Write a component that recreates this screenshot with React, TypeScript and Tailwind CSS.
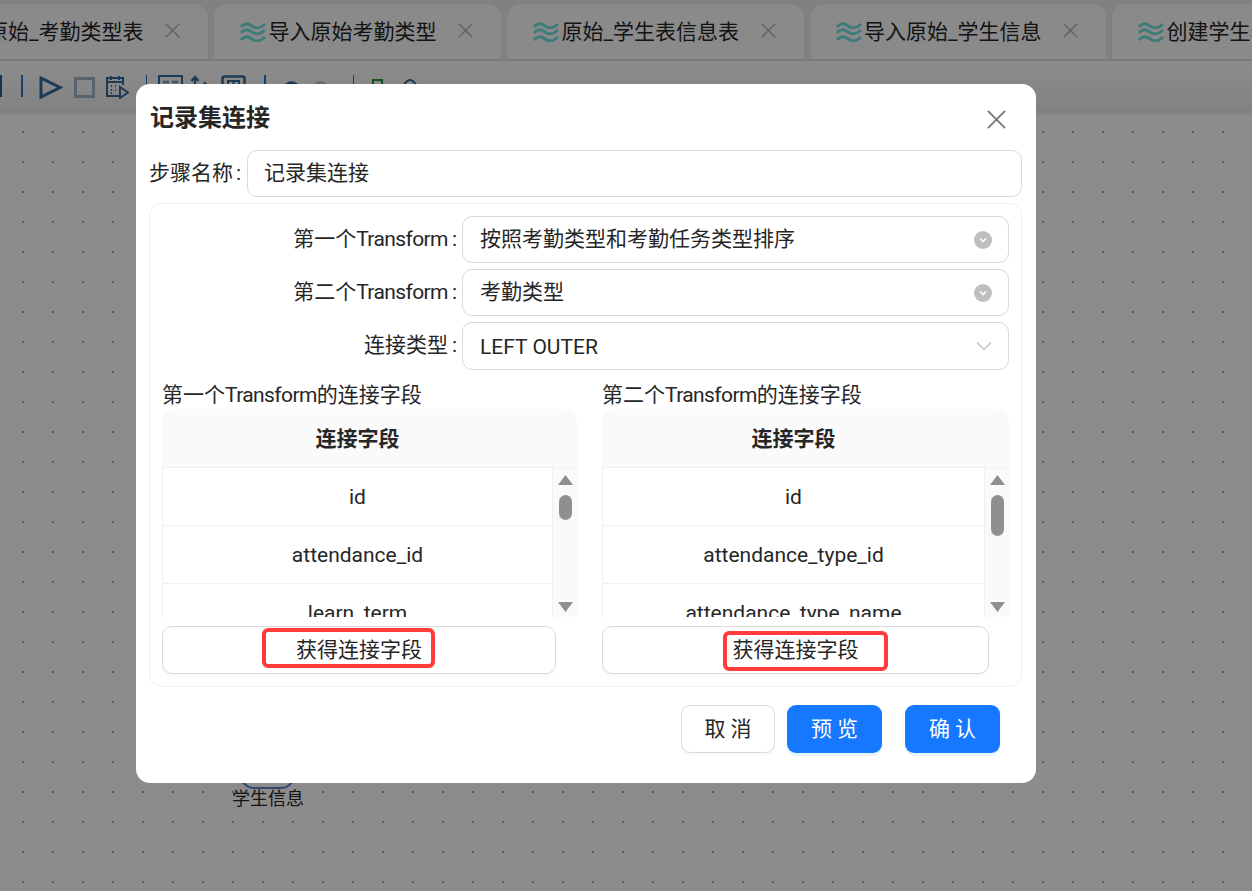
import React from "react";

const font = "font-['Roboto','Noto_Sans_CJK_SC',sans-serif]";

function Wave() {
  return (
    <svg width="26" height="20" viewBox="0 0 26 20" fill="none" stroke="#6fe2dc" strokeWidth="3" className="shrink-0">
      <path d="M1 5 C4 1 8 1 12 4 C16 7 21 6 25 2" />
      <path d="M1 11 C4 7 8 7 12 10 C16 13 21 12 25 8" />
      <path d="M1 18 C4 14 8 14 12 17 C16 20 21 19 25 15" />
    </svg>
  );
}

function X({ size, color, sw }: { size: number; color: string; sw: number }) {
  return (
    <svg width={size} height={size} viewBox="0 0 20 20" fill="none" stroke={color} strokeWidth={sw} className="shrink-0">
      <path d="M1 1 L19 19 M19 1 L1 19" />
    </svg>
  );
}

function Tab({ label, className }: { label: string; className?: string }) {
  return (
    <div className={`shrink-0 flex items-center h-[57px] pl-[26px] pr-[28px] bg-[#fbfbfb] border border-b-[#e0e0e0] border-[#e8e8e8] rounded-t-[15px] ${className ?? ""}`}>
      <Wave />
      <span className="ml-[2px] text-[21px] leading-[30px] text-[#262626] whitespace-nowrap">{label}</span>
      <span className="ml-[22px] mb-[3px]">
        <X size={15} color="#b0b0b0" sw={1.8} />
      </span>
    </div>
  );
}

function Sep({ className }: { className: string }) {
  return <div className={`w-[1.5px] h-[22px] bg-[#1f78d1] shrink-0 ${className}`} />;
}

function Toolbar() {
  const navy = "#34689c";
  return (
    <div className="relative z-10 h-[50px] flex items-start pt-[14px] bg-linear-to-b from-[#ffffff] to-[#ededed] shadow-[0_2px_4px_rgba(0,0,0,0.15)]">
      <div className="w-[2px] h-[22px] bg-[#1f5f99] shrink-0" />
      <Sep className="ml-[19px]" />
      <svg width="24" height="23" viewBox="0 0 24 23" fill="none" stroke={navy} strokeWidth="3" className="ml-[16px] shrink-0 mt-px">
        <path d="M2 2 L21 11.5 L2 21 Z" />
      </svg>
      <svg width="21" height="21" viewBox="0 0 21 21" fill="none" stroke="#a4b4c6" strokeWidth="3" className="ml-[11px] shrink-0 mt-[2px]">
        <rect x="1.5" y="1.5" width="18" height="18" />
      </svg>
      <svg width="24" height="24" viewBox="0 0 24 24" fill="none" stroke={navy} strokeWidth="2" className="ml-[10px] shrink-0">
        <path d="M14 21 H2 V3 H18 V10 M6 1 V5 M14 1 V5 M2 7 H18" />
        <path d="M6 11 H7 M10 11 H11 M6 15 H7 M10 15 H11 M6 18 H7" />
        <path d="M15 12 L23 17.5 L15 23 Z" />
      </svg>
      <Sep className="ml-[17px]" />
      <svg width="25" height="24" viewBox="0 0 25 24" fill="none" stroke={navy} strokeWidth="2" className="ml-[11px] shrink-0">
        <rect x="1" y="1" width="23" height="12" />
        <path d="M5 7 H11 M14 7 H20" strokeWidth="2.5" stroke="#7d9cbb" />
      </svg>
      <svg width="19" height="24" viewBox="0 0 19 24" fill="none" stroke={navy} strokeWidth="2.2" className="ml-[7px] shrink-0">
        <path d="M5 2 V24 M1.5 6 L5 2 L8.5 6 M15 8 V24 M12 12 L15 8 L18 12" />
      </svg>
      <svg width="25" height="24" viewBox="0 0 25 24" fill="none" stroke={navy} strokeWidth="2.5" className="ml-[12px] shrink-0">
        <rect x="1.5" y="1.5" width="22" height="21" rx="2" />
        <path d="M7 6 H18 V14 H7 Z M12.5 6 V14" strokeWidth="2" />
      </svg>
      <Sep className="ml-[18px]" />
      <svg width="21" height="22" viewBox="0 0 21 22" fill="none" stroke={navy} strokeWidth="3" className="ml-[14px] shrink-0 mt-[4px]">
        <path d="M2 14 C3 6 9 3 13 4 C17 5 19 8 20 12 M1 6 V14 H8" />
      </svg>
      <svg width="21" height="22" viewBox="0 0 21 22" fill="none" stroke="#bdbdbd" strokeWidth="3" className="ml-[10px] shrink-0 mt-[4px]">
        <path d="M19 14 C18 6 12 3 8 4 C4 5 2 8 1 12 M20 6 V14 H13" />
      </svg>
      <Sep className="ml-[21px]" />
      <svg width="15" height="22" viewBox="0 0 15 22" fill="none" stroke="#1f9d3a" strokeWidth="2.2" className="ml-[16px] shrink-0 mt-[3px]">
        <path d="M3 20 V2 H12 V8" />
      </svg>
      <svg width="24" height="22" viewBox="0 0 24 22" fill="none" stroke={navy} strokeWidth="2" className="ml-[13px] shrink-0 mt-[3px]">
        <path d="M1 14 C5 12 6 2 12 2 C18 2 19 12 23 14 Z" />
      </svg>
    </div>
  );
}

function Chevron({ size = 16 }: { size?: number }) {
  return (
    <svg width={size} height={size} viewBox="0 0 16 16" fill="none" stroke="#bdbdbd" strokeWidth="1.2">
      <path d="M1 4.5 L8 11.5 L15 4.5" />
    </svg>
  );
}

function ClearIcon() {
  return (
    <div className="w-[18px] h-[18px] rounded-full bg-[#bfbfbf] flex items-center justify-center">
      <svg width="8" height="8" viewBox="0 0 8 8" fill="none" stroke="#fff" strokeWidth="1.6">
        <path d="M1 2.5 L4 5.5 L7 2.5" />
      </svg>
    </div>
  );
}

function Tf() {
  return <span className="tracking-[-0.6px]">Transform</span>;
}

function SelectRow({ label, value, icon, tall }: { label: React.ReactNode; value: string; icon: React.ReactNode; tall?: boolean }) {
  return (
    <div className="flex items-stretch">
      <div className="w-[300px] shrink-0 flex items-center justify-end text-[21px] text-[#262626] whitespace-nowrap">
        <span>{label}</span>
        <span className="ml-[4px] mr-[5px]">:</span>
      </div>
      <div className={`flex-1 ${tall ? "h-[48px]" : "h-[47px]"} border border-[#d9d9d9] rounded-[10px] bg-white pl-[17px] pr-[16px] flex items-center justify-between`}>
        <span className={`text-[21px] text-[#262626] whitespace-nowrap ${tall ? "pt-[3px]" : "pt-px"}`}>{value}</span>
        {icon}
      </div>
    </div>
  );
}

function Row({ text }: { text: string }) {
  return (
    <div className="h-[58px] shrink-0 flex items-center justify-center pt-[2px] border-b border-[#f0f0f0] text-[21px] text-[#262626]">
      {text}
    </div>
  );
}

function FieldTable({ rows, width, thumb }: { rows: string[]; width: string; thumb: string }) {
  return (
    <div className={`${width} h-[208px] overflow-hidden rounded-t-[12px] flex flex-col shrink-0`}>
      <div className="h-[59px] shrink-0 flex bg-[#fafafa] border-b border-[#f0f0f0]">
        <div className="flex-1 flex items-center justify-center pt-[3px] text-[21px] font-semibold text-[#262626]">连接字段</div>
        <div className="w-[24px] shrink-0" />
      </div>
      <div className="flex flex-1 min-h-0">
        <div className="flex-1 flex flex-col border-l border-r border-[#f0f0f0] overflow-hidden">
          {rows.map((r) => (
            <Row key={r} text={r} />
          ))}
        </div>
        <div className="w-[24px] shrink-0 bg-[#fafafa] flex flex-col items-center pt-[7px]">
          <svg width="15" height="10" viewBox="0 0 15 10" fill="#8f8f8f" className="shrink-0">
            <path d="M7.5 0 L15 10 H0 Z" />
          </svg>
          <div className={`w-[13px] mt-[10px] rounded-full bg-[#8f8f8f] shrink-0 ${thumb}`} />
          <div className="flex-1" />
          <svg width="15" height="10" viewBox="0 0 15 10" fill="#8f8f8f" className="shrink-0 mb-[5px]">
            <path d="M7.5 10 L15 0 H0 Z" />
          </svg>
        </div>
      </div>
    </div>
  );
}

function FetchButton({ width, mark }: { width: string; mark: string }) {
  return (
    <div className={`relative ${width} h-[48px] mt-[9px] pt-[2px] border border-[#d9d9d9] rounded-[10px] bg-white shadow-[0_3px_0_rgba(0,0,0,0.02)] flex items-center justify-center text-[21px] text-[#262626]`}>
      获得连接字段
      <div className={`absolute border-[4px] border-[#ff3b3b] rounded-[6px] h-[40px] ${mark}`} />
    </div>
  );
}

function Modal() {
  return (
    <div className="absolute left-[136px] top-[84px] z-30 w-[900px] h-[699px] bg-white rounded-[14px] pl-[13px] pr-[14px] flex flex-col">
      <div className="h-[66px] shrink-0 flex items-center justify-between pl-[1px] pr-[16px]">
        <span className="mt-[2px] text-[24px] font-bold text-[#262626] leading-[32px]">记录集连接</span>
        <span className="mt-[5px]">
          <X size={19} color="#7a7a7a" sw={2} />
        </span>
      </div>
      <div className="flex items-stretch h-[47px] shrink-0">
        <div className="w-[98px] shrink-0 flex items-center text-[21px] text-[#262626] whitespace-nowrap">
          步骤名称<span className="ml-[3px]">:</span>
        </div>
        <div className="flex-1 border border-[#d9d9d9] rounded-[10px] pl-[16px] pt-px flex items-center text-[21px] text-[#262626]">记录集连接</div>
      </div>
      <div className="mt-[6px] h-[484px] shrink-0 border border-[#f0f0f0] rounded-[12px] pt-[12px] pl-[12px] pr-[12px] flex flex-col">
        <div className="flex flex-col gap-[6px]">
          <SelectRow label={<>第一个<Tf /></>} value="按照考勤类型和考勤任务类型排序" icon={<ClearIcon />} />
          <SelectRow label={<>第二个<Tf /></>} value="考勤类型" icon={<ClearIcon />} />
          <SelectRow label="连接类型" value="LEFT OUTER" icon={<Chevron />} tall />
        </div>
        <div className="flex gap-[25px] mt-[9px]">
          <div className="flex flex-col w-[415px] shrink-0">
            <div className="h-[30px] pt-px text-[21px] leading-[30px] text-[#262626] whitespace-nowrap">第一个<Tf />的连接字段</div>
            <FieldTable width="w-[415px]" thumb="h-[25px]" rows={["id", "attendance_id", "learn_term"]} />
            <FetchButton width="w-[394px]" mark="left-[99px] top-[1px] w-[173px]" />
          </div>
          <div className="flex flex-col w-[407px] shrink-0">
            <div className="h-[30px] pt-px text-[21px] leading-[30px] text-[#262626] whitespace-nowrap">第二个<Tf />的连接字段</div>
            <FieldTable width="w-[407px]" thumb="h-[41px]" rows={["id", "attendance_type_id", "attendance_type_name"]} />
            <FetchButton width="w-[387px]" mark="left-[120px] top-[4px] w-[165px]" />
          </div>
        </div>
      </div>
      <div className="mt-[18px] pr-[22px] flex justify-end shrink-0">
        <button className="w-[94px] h-[48px] pt-[2px] border border-[#d9d9d9] rounded-[9px] bg-white text-[21px] text-[#262626] shadow-[0_3px_0_rgba(0,0,0,0.02)]">取 消</button>
        <button className="ml-[12px] w-[95px] h-[48px] pt-[2px] rounded-[9px] bg-[#1677ff] text-[21px] text-white shadow-[0_3px_0_rgba(5,145,255,0.1)]">预 览</button>
        <button className="ml-[23px] w-[95px] h-[48px] pt-[2px] rounded-[9px] bg-[#1677ff] text-[21px] text-white shadow-[0_3px_0_rgba(5,145,255,0.1)]">确 认</button>
      </div>
    </div>
  );
}

export default function App() {
  return (
    <div className={`relative w-[1252px] h-[891px] overflow-hidden flex flex-col bg-white ${font}`}>
      <div className="h-[61px] shrink-0 pt-[3px] bg-[#ececec] flex gap-[4px] overflow-hidden border-b border-[#e0e0e0]">
        <Tab label="原始_考勤类型表" className="-ml-[68px]" />
        <Tab label="导入原始考勤类型" />
        <Tab label="原始_学生表信息表" />
        <Tab label="导入原始_学生信息" />
        <Tab label="创建学生表信息" />
      </div>
      <Toolbar />
      <div className="relative flex-1 bg-white bg-[radial-gradient(circle,#a8a8a8_1px,transparent_1px)] bg-[size:30px_30px] bg-[position:8px_6px]">
        <div className="absolute left-[240px] top-[628px] w-[55px] h-[50px] border-2 border-[#5b86d6] rounded-[14px] bg-white" />
        <div className="absolute left-[232px] top-[675px] text-[18px] leading-[26px] text-[#262626] whitespace-nowrap">学生信息</div>
      </div>
      <div className="absolute inset-0 z-20 bg-black/45" />
      <Modal />
    </div>
  );
}
